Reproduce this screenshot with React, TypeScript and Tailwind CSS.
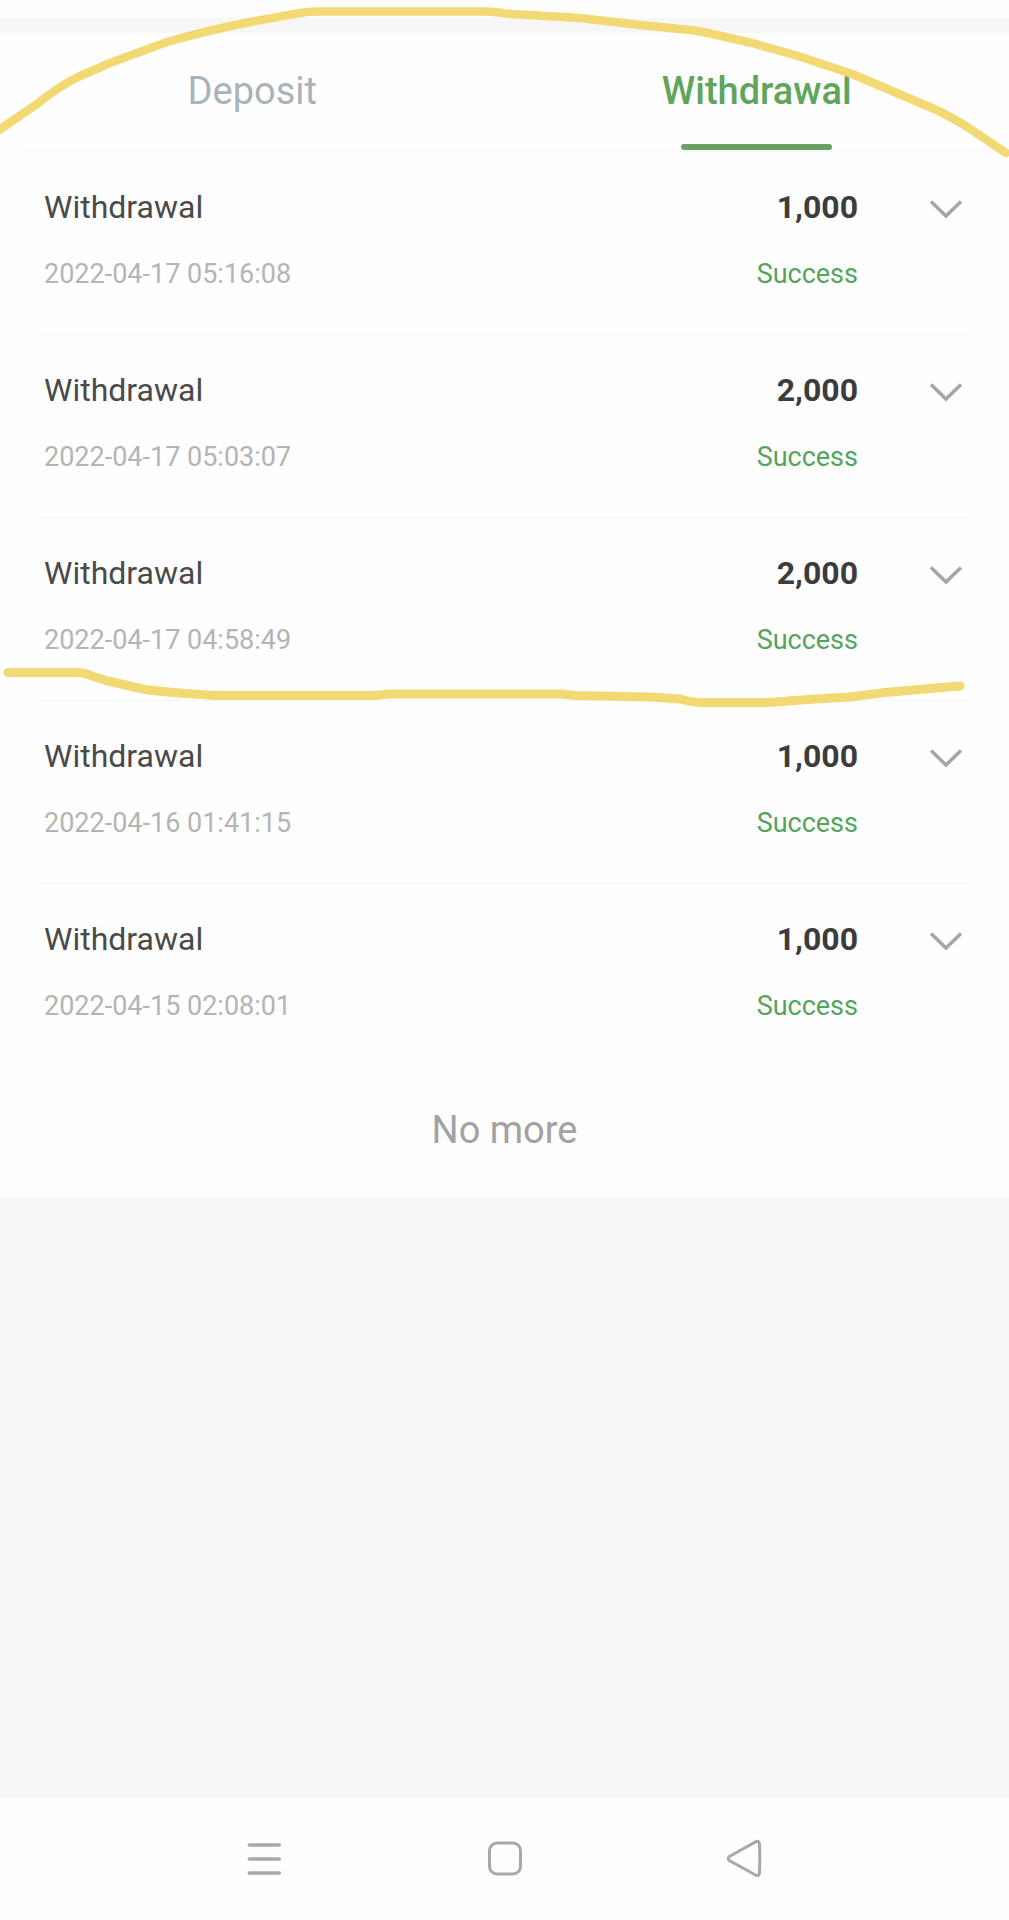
import { useState } from "react";
import clsx from "clsx";

type TabName = "Deposit" | "Withdrawal";

type Transaction = {
  type: string;
  time: string;
  amount: string;
  status: string;
};

const TABS: TabName[] = ["Deposit", "Withdrawal"];

const TRANSACTIONS: Transaction[] = [
  { type: "Withdrawal", time: "2022-04-17 05:16:08", amount: "1,000", status: "Success" },
  { type: "Withdrawal", time: "2022-04-17 05:03:07", amount: "2,000", status: "Success" },
  { type: "Withdrawal", time: "2022-04-17 04:58:49", amount: "2,000", status: "Success" },
  { type: "Withdrawal", time: "2022-04-16 01:41:15", amount: "1,000", status: "Success" },
  { type: "Withdrawal", time: "2022-04-15 02:08:01", amount: "1,000", status: "Success" },
];

function Tabs({ active, onChange }: { active: TabName; onChange: (tab: TabName) => void }) {
  return (
    <div className="bg-[#fefefe]">
      <div role="tablist" className="grid grid-cols-2">
        {TABS.map((tab) => (
          <button
            key={tab}
            type="button"
            role="tab"
            aria-selected={tab === active}
            onClick={() => onChange(tab)}
            className={clsx(
              "flex flex-col items-center pt-[34px] text-[38px] leading-12",
              tab === active ? "font-medium text-[#5fa55a]" : "text-[#a9b3b9]",
            )}
          >
            {tab}
            <span
              className={clsx(
                "mt-[29px] mb-px h-1.5 w-[151px] rounded-full",
                tab === active && "bg-[#68a262]",
              )}
            />
          </button>
        ))}
      </div>
      <div className="mx-6 h-px bg-[#f7f7f7]" />
    </div>
  );
}

function TransactionRow({ type, time, amount, status }: Transaction) {
  return (
    <li className="flex items-start border-b border-[#f6f6f6] pt-[35px] pr-[5px] pb-11 pl-1 last:border-b-0">
      <div className="flex-1">
        <p className="text-[32px] leading-10 text-[#4a4a4a]">{type}</p>
        <p className="mt-[31px] text-[27px] leading-8 text-[#b4b4b4]">{time}</p>
      </div>
      <div className="text-right">
        <p className="text-[32px] leading-10 font-bold text-[#3c3c3c]">{amount}</p>
        <p className="mt-[31px] text-[27px] leading-8 text-[#55a45c]">{status}</p>
      </div>
      <button type="button" aria-label="Show details" className="ml-[70px] pt-2.5 text-[#a6a6a6]">
        <svg viewBox="0 0 36 24" className="h-6 w-9" fill="none" stroke="currentColor" strokeWidth="3.5">
          <path d="M3 4.500 18 19 33 4.500" />
        </svg>
      </button>
    </li>
  );
}

function NavBar() {
  return (
    <nav className="flex justify-center gap-[204px] bg-[#fefefe] py-[41px] text-[#a8a8a8]">
      <button type="button" aria-label="Recent apps">
        <svg viewBox="0 0 36 40" className="h-10 w-9" fill="none" stroke="currentColor" strokeWidth="3.5" strokeLinecap="round">
          <path d="M2.300 6h30M2.300 20h30M2.300 34h30" />
        </svg>
      </button>
      <button type="button" aria-label="Home">
        <svg viewBox="0 0 36 40" className="h-10 w-9" fill="none" stroke="currentColor" strokeWidth="3">
          <rect x="2.500" y="4" width="31" height="31" rx="7.500" />
        </svg>
      </button>
      <button type="button" aria-label="Back">
        <svg viewBox="0 0 36 40" className="h-10 w-9" fill="none" stroke="currentColor" strokeWidth="3" strokeLinejoin="round">
          <path d="M2.300 17.500 28.500 2.900q3.400-1.600 3.900 1.600.8 15 0 30-.5 3.200-3.900 1.500L2.300 21.500q-1.900-2 0-4Z" />
        </svg>
      </button>
    </nav>
  );
}

// Freehand marker strokes laid over the list
function MarkerStrokes() {
  return (
    <svg
      viewBox="0 0 1009 720"
      aria-hidden="true"
      className="pointer-events-none absolute inset-x-0 top-0 w-full"
      fill="none"
      stroke="#f2d973"
      strokeLinecap="round"
      strokeLinejoin="round"
    >
      <path
        strokeWidth="8.5"
        d="M-4 132 37 104Q58 87 78 77L110 63 167 42Q205 31 250 22L300 13Q308 11.500 318 11.500H485Q497 12 505 13.500L580 18 640 25 680 29Q695 30 708 33L752 43 795 55 852 74 932 108Q952 117 972 130L1006 153"
      />
      <path
        strokeWidth="9"
        d="M8 672.500H78Q86 673 92 676L108 681 145 689.500Q170 692.500 200 694.500L215 695.500H375L390 694H560L575 695.500 650 697 680 699Q692 702.500 702 702.500H768L815 699 850 697 885 692.500 930 688.500 960 686"
      />
    </svg>
  );
}

export default function App() {
  const [activeTab, setActiveTab] = useState<TabName>("Withdrawal");

  return (
    <div className="relative flex min-h-screen flex-col bg-[#f7f7f7] font-[Roboto,sans-serif]">
      <div className="mb-[15px] h-[18px] bg-[#fefefe]" />
      <Tabs active={activeTab} onChange={setActiveTab} />
      <main className="flex-1">
        <div className="bg-[#fefefe]">
          <ul className="mx-10">
            {TRANSACTIONS.map((item) => (
              <TransactionRow key={item.time} {...item} />
            ))}
          </ul>
          <p className="pt-10 pb-11 text-center text-[38px] leading-12 text-[#a2a2a2]">No more</p>
        </div>
      </main>
      <NavBar />
      <MarkerStrokes />
    </div>
  );
}
